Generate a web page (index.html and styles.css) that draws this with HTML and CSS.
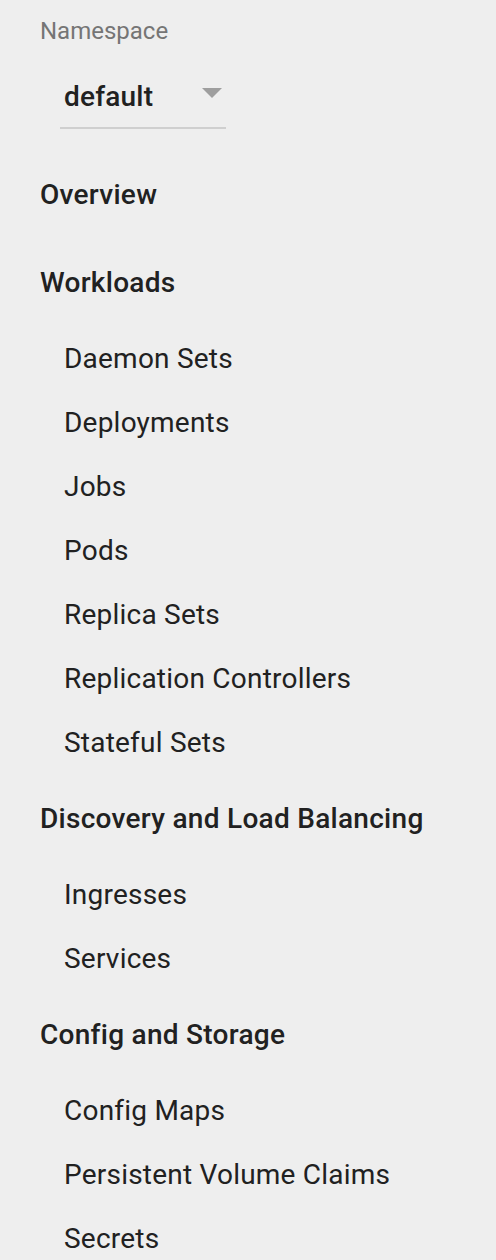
FILE: index.html
```html
<!DOCTYPE html>
<html lang="en">
<head>
  <meta charset="UTF-8">
  <title>Navigation</title>
  <link rel="stylesheet" href="styles.css">
</head>
<body>
  <div class="namespace">
    <div class="namespace-label">Namespace</div>
    <div class="namespace-select">
      <span class="namespace-value">default</span>
      <svg class="namespace-arrow" width="20" height="10" viewBox="0 0 20 10"><path d="M0 0 L20 0 L10 10 Z" fill="#9e9e9e"/></svg>
    </div>
  </div>

  <nav class="nav">
    <div class="nav-section">
      <div class="nav-header">Overview</div>
    </div>
    <div class="nav-section">
      <div class="nav-header">Workloads</div>
      <div class="nav-item">Daemon Sets</div>
      <div class="nav-item">Deployments</div>
      <div class="nav-item">Jobs</div>
      <div class="nav-item">Pods</div>
      <div class="nav-item">Replica Sets</div>
      <div class="nav-item">Replication Controllers</div>
      <div class="nav-item">Stateful Sets</div>
    </div>
    <div class="nav-section">
      <div class="nav-header">Discovery and Load Balancing</div>
      <div class="nav-item">Ingresses</div>
      <div class="nav-item">Services</div>
    </div>
    <div class="nav-section">
      <div class="nav-header">Config and Storage</div>
      <div class="nav-item">Config Maps</div>
      <div class="nav-item">Persistent Volume Claims</div>
      <div class="nav-item">Secrets</div>
    </div>
  </nav>
</body>
</html>
```

FILE: styles.css
```css
body {
  font-family: Roboto, "Liberation Sans", sans-serif;
  margin: 0;
  background-color: #eeeeee;
  color: #212121;
  height: 1260px;
  overflow: hidden;
}
.namespace {
  padding: 13px 0 0 40px;
}
.namespace-label {
  font-size: 24px;
  line-height: 36px;
  color: #757575;
}
.namespace-select {
  display: flex;
  align-items: flex-start;
  justify-content: space-between;
  width: 166px;
  height: 68px;
  margin: 12px 0 0 20px;
  padding: 18px 4px 0 4px;
  border-bottom: 2px solid #cfcfcf;
  box-sizing: border-box;
}
.namespace-value {
  font-size: 28px;
  font-weight: 500;
  line-height: 36px;
  letter-spacing: 0.2px;
}
.namespace-arrow {
  margin-top: 9px;
}
.nav {
  margin-top: 34px;
}
.nav-section {
  padding-bottom: 12px;
}
.nav-header {
  font-size: 28px;
  font-weight: 500;
  line-height: 64px;
  letter-spacing: 0.28px;
  padding-left: 40px;
  margin-bottom: 12px;
}
.nav-item {
  font-size: 28px;
  line-height: 64px;
  letter-spacing: 0.22px;
  padding-left: 64px;
}
```
